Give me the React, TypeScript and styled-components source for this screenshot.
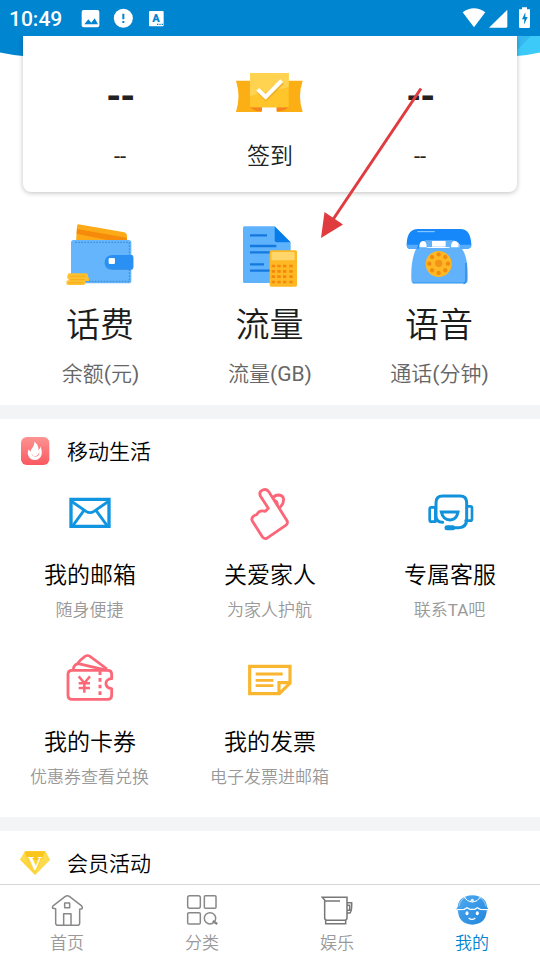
import React from 'react';
import styled, { createGlobalStyle } from 'styled-components';

const GlobalStyle = createGlobalStyle`
  * { box-sizing: border-box; }
  body {
    margin: 0;
    background: #fff;
    font-family: Roboto, "Noto Sans CJK SC", sans-serif;
    font-weight: 350;
  }
  svg { display: block; flex: none; }
`;

const Screen = styled.div`
  position: relative;
  width: 540px;
  height: 960px;
  display: flex;
  flex-direction: column;
  overflow: hidden;
  background: #fff;
`;

const StatusBar = styled.header`
  flex: none;
  height: 36px;
  padding: 0 8px 0 9px;
  display: flex;
  align-items: center;
  background: #0085d0;
  color: #fff;
`;

const Clock = styled.span`
  width: 72px;
  font-size: 21px;
  font-weight: 500;
  line-height: 36px;
  padding-top: 1px;
`;

const StatusRight = styled.div`
  margin-left: auto;
  display: flex;
`;

const Content = styled.main`
  flex: 1;
  min-height: 0;
  overflow: hidden;
`;

const Hero = styled.section`
  display: grid;
  grid-template-columns: 23px 1fr 23px;
  height: 156px;
`;

const SignCard = styled.div`
  position: relative;
  display: grid;
  grid-template-columns: repeat(3, 150px);
  justify-content: center;
  background: #fff;
  border-radius: 0 0 8px 8px;
  box-shadow: 0 1px 5px rgba(0, 0, 0, 0.25);
`;

const SignCell = styled.div`
  display: flex;
  flex-direction: column;
  align-items: center;
  color: #222;
`;

const SignTop = styled.div`
  height: 50px;
  margin-top: 32px;
`;

const SignValue = styled.div`
  height: 50px;
  margin-top: 32px;
  padding-top: 4px;
  font-size: 37px;
  font-weight: 800;
  letter-spacing: -1.5px;
  line-height: 50px;
`;

const SignLabel = styled.div<{ $size: number }>`
  margin-top: 23px;
  font-size: ${(p) => p.$size}px;
  line-height: 32px;
`;

const Latin = styled.span`
  font-weight: 400;
`;

const Stats = styled.section`
  display: grid;
  grid-template-columns: repeat(3, 169.5px);
  justify-content: center;
  height: 213px;
  padding: 28px 1px 0 0;
`;

const Stat = styled.div`
  display: flex;
  flex-direction: column;
  align-items: center;
`;

const StatName = styled.div`
  margin-top: 11px;
  font-size: 34px;
  line-height: 48px;
  color: #1c1c1c;
`;

const StatUnit = styled.div`
  margin-top: 10px;
  padding-left: 1px;
  font-size: 21px;
  line-height: 30px;
  color: #666;
`;

const Divider = styled.div`
  height: 14px;
  background: #f2f4f6;
`;

const SectionHeader = styled.div`
  height: 64px;
  padding: 17px 20px;
  display: flex;
  align-items: flex-start;
  gap: 17px;
`;

const SectionTitle = styled.h2`
  margin: 0;
  font-size: 21px;
  line-height: 32px;
  color: #000;
  font-weight: 350;
`;

const ServiceGrid = styled.div`
  display: grid;
  grid-template-columns: repeat(3, 180px);
  grid-auto-rows: 167px;
`;

const Service = styled.div`
  display: flex;
  flex-direction: column;
  align-items: center;
`;

const ServiceName = styled.div`
  margin-top: 16px;
  font-size: 23px;
  line-height: 34px;
  color: #000;
`;

const ServiceNote = styled.div`
  margin-top: 4px;
  padding-right: 1px;
  font-size: 17px;
  line-height: 26px;
  color: #999;
`;

const TabBar = styled.nav`
  flex: none;
  height: 76px;
  display: grid;
  grid-template-columns: repeat(4, 135px);
  border-top: 1px solid #d6d6d6;
  background: #fff;
`;

const Tab = styled.div<{ $active?: boolean }>`
  display: flex;
  flex-direction: column;
  align-items: center;
  gap: 1px;
  padding: 9px 1px 0 0;
  font-size: 17px;
  line-height: 32px;
  color: ${(p) => (p.$active ? '#0085d0' : '#999')};
`;

const Pointer = styled.svg`
  position: absolute;
  left: 315px;
  top: 80px;
`;

const GridBody = styled.div`
  height: 334px;
`;

const StatusLeftIcons = () => (
  <svg width="86" height="24" viewBox="243 18 258 72">
    <rect x="245" y="30" width="53" height="52" rx="6" fill="#fff" />
    <path d="M253 73l12-15 9 10 10-13 10 18z" fill="#0085d0" />
    <circle cx="370" cy="55" r="28.5" fill="#fff" />
    <path d="M370 41v17M370 63v6" stroke="#0085d0" strokeWidth="6" />
    <rect x="447" y="33" width="44" height="46" rx="3" fill="#fff" />
    <text x="468" y="67" textAnchor="middle" fontSize="33" fontWeight="900" fill="#0085d0">A</text>
    <path d="M471 73h18" stroke="#0085d0" strokeWidth="4" strokeDasharray="4 3" />
  </svg>
);

const StatusRightIcons = () => (
  <svg width="70" height="24" viewBox="576 16 210 72">
    <path d="M578 35Q612 10 646 35L612 80z" fill="#fff" />
    <path d="M712 27v50q0 4-4 4H657z" fill="#fff" />
    <path d="M756 20h15v6h9v52q0 4-4 4h-25q-4 0-4-4V26h9z" fill="#fff" />
    <path d="M766 35l-10 21h7l-1 16 11-23h-7z" fill="#0085d0" />
  </svg>
);

const RibbonIcon = () => (
  <svg width="80" height="50" viewBox="420 24 240 150">
    <path d="M438 62h200q-16 47 0 94h-78v-14h-45v14h-77q15-47 0-94z" fill="#fcae15" />
    <path d="M480 142h36v11q-20 3-36-11zM596 142h-36v11q20 3 36-11z" fill="#f5841f" />
    <path d="M480 39h116v103H480z" fill="#ffc52b" />
    <path d="M480 39h116v42L480 108z" fill="#ffd34f" />
    <path d="M501 89l25 24 50-49" fill="none" stroke="#e2a422" strokeWidth="11" transform="translate(2 4)" opacity=".6" />
    <path d="M503 88l24 23 48-49" fill="none" stroke="#fff" strokeWidth="12" />
  </svg>
);

const WalletIcon = () => (
  <svg width="80" height="70" viewBox="32 30 240 210">
    <path d="M87 43l138 24q8 2 8 10v20H80l3-48q0-6 4-6z" fill="#fdaa18" />
    <path d="M83 57l149 26v11l-55-3L82 71z" fill="#f58a0b" />
    <rect x="65" y="90" width="181" height="130" rx="8" fill="#64b5fb" />
    <path d="M78 97h162v117H72" fill="none" stroke="#347fc9" strokeWidth="2.5" strokeDasharray="5 4" />
    <path d="M188 138h59q5 0 5 6v30q0 6-5 6h-59q-22-3-22-21t22-21z" fill="#2378cf" opacity=".55" />
    <path d="M188 135h59q5 0 5 6v30q0 6-5 6h-59q-22-3-22-21t22-21z" fill="#2b90f4" />
    <rect x="178" y="144" width="19" height="18" rx="4" fill="#fff" />
    <path d="M58 190h52q6 0 6 7v5l3 2v9h-10q0 12-8 12H57q-6 0-6-7t6-7h4l-6-5q-4-8 3-16z" fill="#fdc02f" />
    <path d="M63 199h45M62 209h44M59 218h42" stroke="#f2a217" strokeWidth="2" />
  </svg>
);

const BillIcon = () => (
  <svg width="80" height="70" viewBox="30 30 240 210">
    <path d="M73 49h90l49 49v121H73q-4 0-4-5V54q0-5 4-5z" fill="#5fb3fd" />
    <path d="M164 49l48 48h-42q-6 0-6-6z" fill="#087ce8" />
    <path d="M90 76h51M90 108h79M90 127h60M90 163h42M90 182h60" stroke="#1479df" strokeWidth="7" />
    <rect x="149" y="121" width="82" height="109" rx="5" fill="#fdb823" />
    <rect x="154" y="126" width="70" height="25" rx="3" fill="#ffd66a" />
    {[168, 184, 200, 216].map((y) => (
      <path key={y} d={`M155 ${y}h10m7 0h10m7 0h10m9 0h10`} stroke="#f3880d" strokeWidth="8" />
    ))}
  </svg>
);

const PhoneIcon = () => (
  <svg width="80" height="70" viewBox="57 30 240 210">
    <path d="M116 105q0-13 12-13t12 19q0 3 2 3h65q3 0 3-5 0-17 12-17t15 16c19 13 28 48 26 101q0 10-7 10H101q-7 0-7-10c-2-52 8-88 22-104z" fill="#61b2fb" />
    <path d="M258 159v51q0 10-8 10" fill="none" stroke="#3191ec" strokeWidth="5" />
    <path d="M98 219h152" stroke="#2f91ec" strokeWidth="3" />
    <path d="M80 105q0-48 34-48h127q32 0 33 49 0 11-15 10h-15q-7-24-22-24H136q-13 0-20 24H91q-11 1-11-11z" fill="#1688fa" />
    <path d="M80 104h35l-4 12H91q-10 1-11-12zM237 104h37q0 12-15 12h-17z" fill="#58adfa" />
    <path d="M136 92h84l10 20h-20q-34-4-68 0h-16z" fill="#61b2fb" />
    <path d="M156 93h41v17h-41z" fill="#fff" />
    <path d="M118 112q0-19 11-19 11 0 11 19zM213 112q0-19 11-19 11 0 12 19z" fill="#fff" />
    <path d="M112 65h52" stroke="#9bd1ff" strokeWidth="3" />
    <circle cx="176" cy="162" r="39" fill="#fdb824" />
    <circle cx="176" cy="160" r="11" fill="#f39317" />
    {[0, 45, 90, 135, 180, 225, 270, 315].map((a) => (
      <circle key={a} cx="176" cy="133" r="6.5" fill="#f18b11" transform={`rotate(${a} 176 161)`} />
    ))}
  </svg>
);

const FlameIcon = () => (
  <svg width="30" height="30" viewBox="60 108 90 90">
    <defs>
      <linearGradient id="flame-bg" x1="0" y1="0" x2="0" y2="1">
        <stop offset="0" stopColor="#fc9392" />
        <stop offset="1" stopColor="#fb5860" />
      </linearGradient>
    </defs>
    <rect x="63" y="111" width="85" height="84" rx="17" fill="url(#flame-bg)" />
    <path d="M103 125c12 9 13 18 12 25 4-2 6-6 6-11 10 23 2 41-16 41-19 0-27-20-18-33 1 5 3 7 5 8 1-11 12-15 11-30z" fill="#fff" />
    <path d="M95 160q2 9 10 9t13-13q1 13-12 14-11 0-11-10z" fill="#fb747a" />
  </svg>
);

const DiamondIcon = () => (
  <svg width="30" height="30" viewBox="60 114 90 90">
    <path d="M76 124h59l15 25-45 46-45-46z" fill="#fcd53a" />
    <path d="M76 124h59l7 11-27 15H95l-24-17z" fill="#fcc51b" />
    <path d="M60 149l15-25 5 35zM135 124l15 25-45 46z" fill="#fdda4e" />
    <text x="105" y="179" textAnchor="middle" fontSize="58" fontWeight="700" fontFamily="Liberation Serif, serif" fill="#fff">V</text>
  </svg>
);

const MailIcon = () => (
  <svg width="60" height="60" viewBox="180 249 180 180">
    <g fill="none" stroke="#1295e0" strokeWidth="10">
      <path d="M213 298h114v81H213z" />
      <path d="M213 303l45 31q12 8 24 0l45-31M252 331l-35 48M288 331l35 48" strokeWidth="8.5" />
    </g>
  </svg>
);

const HandIcon = () => (
  <svg width="60" height="60" viewBox="120 9 180 180">
    <g fill="none" stroke="#fb6678" strokeWidth="8.5" strokeLinejoin="round" strokeLinecap="round">
      <path d="M205 85L181 48q-5-13 7-18 12-5 19 6l54 86q4 9-4 14l-57 39q-9 3-14-6l-29-46q-4-9 3-14 3-3 10-5l6-8q10-6 20-2z" />
      <path d="M220 53q5-8 16-8 14 1 15 14 0 10-9 21" />
      <path d="M223 60q10 2 10 13" strokeWidth="6" />
    </g>
  </svg>
);

const SupportIcon = () => (
  <svg width="60" height="60" viewBox="660 9 180 180">
    <g fill="none" stroke="#1292da" strokeWidth="9" strokeLinejoin="round" strokeLinecap="round">
      <path d="M728 127q-20 0-20-19V68q0-20 20-20h52q20 0 20 20v50q0 25-24 25h-15" />
      <path d="M706 82h-12q-5 0-5 6v31q0 6 5 6h12zM802 79h9q5 0 5 6v31q0 6-5 6h-14" strokeWidth="8" />
      <path d="M724 96h50q-4 23-24 24-21-1-26-24z" strokeLinejoin="miter" strokeWidth="9" />
      <path d="M741 143h17" strokeWidth="15" />
    </g>
  </svg>
);

const CouponIcon = () => (
  <svg width="60" height="60" viewBox="180 30 180 180">
    <g fill="none" stroke="#fb6878" strokeWidth="8.5" strokeLinejoin="round">
      <path d="M216 91h107q12 0 12 12v13c-23 1-23 28 0 30v19q0 13-12 13H216q-12 0-12-13v-62q0-12 12-12z" />
      <path d="M220 89q1-16 15-18l77 18M233 70q7-10 22-21 8-5 15 0l51 38" strokeWidth="8" />
      <path d="M300 94v84" strokeDasharray="11 9" strokeWidth="9" />
      <path d="M236 109l17 20 17-20M253 127v31M236 130h34M236 144h34" strokeWidth="7.5" />
    </g>
  </svg>
);

const InvoiceIcon = () => (
  <svg width="60" height="60" viewBox="720 30 180 180">
    <g fill="none" stroke="#fab62f" strokeWidth="9.5">
      <path d="M749 79h121v50l-32 32h-89z" />
      <path d="M870 128h-33v33" />
      <path d="M767 102h81M767 121h53M767 137h53" strokeWidth="8.5" />
    </g>
  </svg>
);

const HomeIcon = () => (
  <svg width="32" height="32" viewBox="153 252 96 96">
    <g fill="none" stroke="#888" strokeWidth="4.5" strokeLinejoin="round">
      <path d="M158 295q-2-6 3-9l35-27q6-4 12 0l35 27q6 5 3 10l-7 2v42q0 6-6 6h-60q-6 0-6-6v-44z" />
      <path d="M191 346v-35h22v35M194 279h15v14h-15z" />
    </g>
  </svg>
);

const CategoryIcon = () => (
  <svg width="32" height="32" viewBox="558 252 96 96">
    <g fill="none" stroke="#888" strokeWidth="4.5">
      <rect x="563" y="257" width="38" height="38" rx="6" />
      <rect x="613" y="257" width="35" height="38" rx="3" />
      <rect x="563" y="308" width="38" height="34" rx="4" />
      <circle cx="630" cy="325" r="17" />
      <path d="M638 333l14 9" strokeWidth="7" />
    </g>
  </svg>
);

const CupIcon = () => (
  <svg width="32" height="32" viewBox="153 252 96 96">
    <g fill="none" stroke="#777" strokeWidth="4.5">
      <path d="M157 262h74v61q0 8-8 8h-51q-8 0-8-8v-53zM231 278h14q1 24-5 31h-9M231 286h8v15h-8M167 332v9h60v-9M164 273h46" />
    </g>
  </svg>
);

const FaceIcon = () => (
  <svg width="32" height="32" viewBox="558 252 96 96">
    <defs>
      <linearGradient id="face-bg" x1="0" y1="0" x2="1" y2="1">
        <stop offset="0" stopColor="#50aaf0" />
        <stop offset="1" stopColor="#2086dc" />
      </linearGradient>
    </defs>
    <path d="M563 291q3-33 44-35 41 2 44 35l4 6-5 7q-3 39-43 40-40-1-43-40l-5-7z" fill="url(#face-bg)" />
    <g fill="none" stroke="#fff">
      <path d="M561 299q10-1 22-1l8-5 9 5h14l8-5 9 5q12 0 23 1" strokeWidth="4" />
      <path d="M583 262l10 10q14 9 28 0l10-10" strokeWidth="3" />
      <path d="M567 289q3-21 22-28M647 289q-3-21-22-28" strokeWidth="2" opacity=".7" />
      <path d="M596 324q10 8 20 0" strokeWidth="4" />
    </g>
    <circle cx="607" cy="271" r="5" fill="#d9efff" />
    <ellipse cx="591" cy="310" rx="4.5" ry="6" fill="#fff" />
    <ellipse cx="622" cy="310" rx="4.5" ry="6" fill="#fff" />
  </svg>
);

/* Latin runs and parentheses are set one step heavier than the Chinese glyphs. */
const Mixed = ({ text }: { text: string }) => (
  <>
    {text.split(/([A-Za-z()-]+)/).map((part, i) =>
      i % 2 ? <Latin key={i}>{part}</Latin> : part,
    )}
  </>
);

const stats = [
  { icon: <WalletIcon />, name: '话费', unit: '余额(元)' },
  { icon: <BillIcon />, name: '流量', unit: '流量(GB)' },
  { icon: <PhoneIcon />, name: '语音', unit: '通话(分钟)' },
];

const services = [
  { icon: <MailIcon />, name: '我的邮箱', note: '随身便捷' },
  { icon: <HandIcon />, name: '关爱家人', note: '为家人护航' },
  { icon: <SupportIcon />, name: '专属客服', note: '联系TA吧' },
  { icon: <CouponIcon />, name: '我的卡券', note: '优惠券查看兑换' },
  { icon: <InvoiceIcon />, name: '我的发票', note: '电子发票进邮箱' },
];

const tabs = [
  { icon: <HomeIcon />, label: '首页' },
  { icon: <CategoryIcon />, label: '分类' },
  { icon: <CupIcon />, label: '娱乐' },
  { icon: <FaceIcon />, label: '我的', active: true },
];

export default function App() {
  return (
    <>
      <GlobalStyle />
      <Screen>
        <StatusBar>
          <Clock>10:49</Clock>
          <StatusLeftIcons />
          <StatusRight>
            <StatusRightIcons />
          </StatusRight>
        </StatusBar>
        <Content>
          <Hero>
            <svg width="23" height="30" viewBox="0 0 23 30">
              <path d="M0 0h23v20Q12 19 0 16.500z" fill="#0085d0" />
            </svg>
            <SignCard>
              <SignCell>
                <SignValue>--</SignValue>
                <SignLabel $size={22}><Mixed text="--" /></SignLabel>
              </SignCell>
              <SignCell>
                <SignTop>
                  <RibbonIcon />
                </SignTop>
                <SignLabel $size={23}>签到</SignLabel>
              </SignCell>
              <SignCell>
                <SignValue>--</SignValue>
                <SignLabel $size={22}><Mixed text="--" /></SignLabel>
              </SignCell>
            </SignCard>
            <svg width="23" height="30" viewBox="0 0 23 30">
              <path d="M0 0h23v16.500Q12 19 0 20z" fill="#3ccbf9" />
              <path d="M0 0h14L0 14z" fill="#34b8f0" />
            </svg>
          </Hero>
          <Stats>
            {stats.map((s) => (
              <Stat key={s.name}>
                {s.icon}
                <StatName>{s.name}</StatName>
                <StatUnit><Mixed text={s.unit} /></StatUnit>
              </Stat>
            ))}
          </Stats>
          <Divider />
          <SectionHeader>
            <FlameIcon />
            <SectionTitle>移动生活</SectionTitle>
          </SectionHeader>
          <GridBody>
            <ServiceGrid>
              {services.map((s) => (
                <Service key={s.name}>
                  {s.icon}
                  <ServiceName>{s.name}</ServiceName>
                  <ServiceNote><Mixed text={s.note} /></ServiceNote>
                </Service>
              ))}
            </ServiceGrid>
          </GridBody>
          <Divider />
          <SectionHeader>
            <DiamondIcon />
            <SectionTitle>会员活动</SectionTitle>
          </SectionHeader>
        </Content>
        <TabBar>
          {tabs.map((t) => (
            <Tab key={t.label} $active={t.active}>
              {t.icon}
              {t.label}
            </Tab>
          ))}
        </TabBar>
        <Pointer width="112" height="164" viewBox="0 0 112 164">
          <path d="M106 8.500L17 141" stroke="#e03c3f" strokeWidth="3" />
          <path d="M6 158l3.500-26 18.500 12.500z" fill="#e03c3f" />
        </Pointer>
      </Screen>
    </>
  );
}
